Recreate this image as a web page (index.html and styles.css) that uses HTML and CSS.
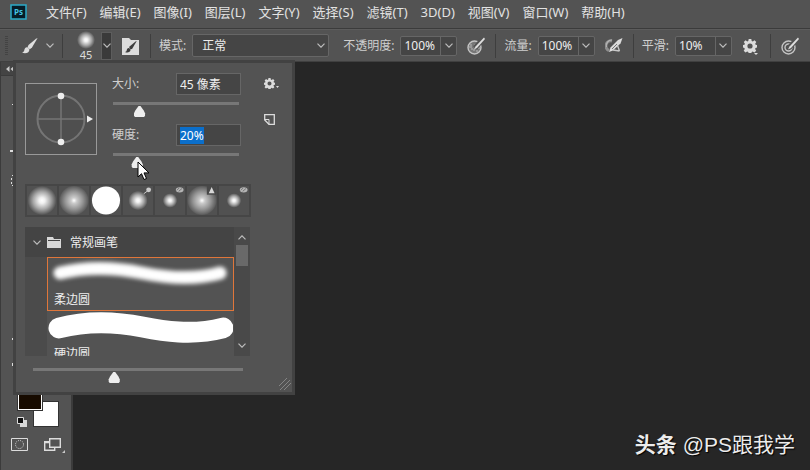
FILE: index.html
```html
<!DOCTYPE html>
<html lang="zh-CN">
<head>
<meta charset="utf-8">
<title>Ps</title>
<link rel="stylesheet" href="styles.css">
</head>
<body>
<svg class="defs" aria-hidden="true">
  <defs>
    <radialGradient id="dab"><stop offset="0" stop-color="#fff"/><stop offset=".2" stop-color="#fff" stop-opacity=".92"/><stop offset=".6" stop-color="#fff" stop-opacity=".5"/><stop offset="1" stop-color="#fff" stop-opacity="0"/></radialGradient>
    <radialGradient id="dab-soft"><stop offset="0" stop-color="#fff"/><stop offset=".2" stop-color="#fff" stop-opacity=".7"/><stop offset=".6" stop-color="#fff" stop-opacity=".4"/><stop offset="1" stop-color="#fff" stop-opacity=".05"/></radialGradient>
    <symbol id="chevron" viewBox="0 0 8 5"><path d="M.5 .7 4 4.2 7.5 .7" fill="none" stroke="#bdbdbd" stroke-width="1.2"/></symbol>
    <symbol id="brush" viewBox="0 0 16 16"><path d="M15.600 0 14 .8 6.500 7 5.500 9.200 7.800 11.200 10 9.500Z"/><path d="M5 9.300C3.200 9.500 2.500 10.700 2.300 12.300 2.100 13.600 1.200 14.300 0 14.600 2.800 16 7.300 15.300 7.400 11.700 6.900 10.500 6.100 9.600 5 9.300Z"/></symbol>
    <symbol id="gear" viewBox="0 0 14 14"><path fill-rule="evenodd" d="M5.700 0h2.600l.4 2 1.100.5L11.500 1.300l1.800 1.800-1.100 1.700.4 1 1.400.3v2.500l-1.500.4-.4 1 1.100 1.700-1.800 1.800-1.700-1.100-1 .5-.4 1.700H5.700l-.4-1.700-1.100-.5-1.700 1.100L.7 11.700 1.800 10l-.4-1-1.400-.4V6.100l1.500-.3.4-1L.8 3.100l1.800-1.800 1.700 1.200 1-.5ZM7 4.400a2.600 2.600 0 1 0 0 5.200 2.600 2.600 0 0 0 0-5.200Z"/></symbol>
    <g id="wet"><ellipse cx="25" cy="4" rx="4" ry="2.800" fill="#b4b4b4"/><path d="m22 4.500 2.500-2.500M24 5.500 27.500 2.500" stroke="#666" stroke-width=".8"/></g>
  </defs>
</svg>

<nav class="menubar" aria-label="Menu">
  <svg class="logo" viewBox="0 0 17 16"><rect x="1" y="1" width="15" height="14" fill="#061c28" stroke="#2cabc9" stroke-width="1.500"/><text x="4" y="11" class="logo-text">Ps</text></svg>
  <a href="#">文件(F)</a><a href="#">编辑(E)</a><a href="#">图像(I)</a><a href="#">图层(L)</a><a href="#">文字(Y)</a><a href="#">选择(S)</a><a href="#">滤镜(T)</a><a href="#">3D(D)</a><a href="#">视图(V)</a><a href="#">窗口(W)</a><a href="#">帮助(H)</a>
</nav>

<div class="options">
  <span class="grip"></span>
  <button class="tool" aria-label="Brush"><svg class="i16" fill="#dedede"><use href="#brush"/></svg><svg class="chev"><use href="#chevron"/></svg></button>
  <span class="sep"></span>
  <div class="preset"><svg viewBox="0 0 18 18"><circle cx="9" cy="9" r="9" fill="url(#dab)"/></svg><span>45</span></div>
  <button class="preset-open" aria-label="Open presets"><svg class="chev"><use href="#chevron"/></svg></button>
  <button class="settings" aria-label="Brush settings"><svg class="i18" viewBox="0 0 18 18"><path d="M0 1h7l2 2h8v15H0Z" fill="#dcdcdc"/><svg x="3" y="4" width="12" height="12" fill="#3c3c3c"><use href="#brush"/></svg></svg></button>
  <span class="sep"></span>
  <div class="field mode-field">
    <label for="mode">模式:</label>
    <span class="pick"><select id="mode"><option>正常</option></select><svg class="chev"><use href="#chevron"/></svg></span>
  </div>
  <div class="field">
    <label for="opacity">不透明度:</label>
    <span class="combo"><input id="opacity" type="text" value="100%"><button aria-label="Opacity slider"><svg class="chev"><use href="#chevron"/></svg></button></span>
  </div>
  <button class="icon" aria-label="Pressure opacity"><svg class="i18" viewBox="0 0 18 18"><circle cx="7.500" cy="10.500" r="6.500" fill="#777" stroke="#c4c4c4" stroke-width="1.400"/><path d="M3 8h2M7 8h2M2 10h3M6 13h2M4 12h2M9 14h2M11 11h2" stroke="#b8b8b8"/><path d="M16.500 1.500 8 11" stroke="#535353" stroke-width="5"/><path d="M17 .5 8.500 9.500 7 12.500 10 11 18 2Z" fill="#dedede"/></svg></button>
  <span class="sep"></span>
  <div class="field">
    <label for="flow">流量:</label>
    <span class="combo"><input id="flow" type="text" value="100%"><button aria-label="Flow slider"><svg class="chev"><use href="#chevron"/></svg></button></span>
  </div>
  <button class="icon" aria-label="Airbrush"><svg class="i18" viewBox="0 0 18 18" fill="none"><path d="M7 4A5 5 0 0 0 4 13.500" stroke="#8e8e8e" stroke-width="3"/><path d="M7 3A5.500 5.500 0 0 0 1.500 10" stroke="#b5b5b5" stroke-width="1.200"/><path d="M17.500 1 13 3 5.500 10.500 4 15 8 13.500 15.500 6.500Z" fill="#dcdcdc"/><path d="M12.500 8.500 14.500 14M8 13l6.500 1" stroke="#c8c8c8" stroke-width="1.400"/><path d="m7 12 5-5" stroke="#777"/></svg></button>
  <span class="sep"></span>
  <div class="field">
    <label for="smooth">平滑:</label>
    <span class="combo"><input id="smooth" type="text" value="10%"><button aria-label="Smoothing slider"><svg class="chev"><use href="#chevron"/></svg></button></span>
  </div>
  <button class="icon" aria-label="Smoothing options"><svg class="i18" viewBox="0 0 18 18" fill="#dcdcdc"><svg x="1" y="2" width="14" height="14"><use href="#gear"/></svg><path d="M12 16h4l-2 2Z"/></svg></button>
  <span class="sep"></span>
  <button class="icon" aria-label="Pressure size"><svg class="i18" viewBox="0 0 18 18" fill="none"><circle cx="7.500" cy="10.500" r="6.500" stroke="#c4c4c4" stroke-width="1.400"/><circle cx="7.500" cy="10.500" r="3.500" stroke="#c4c4c4" stroke-width="1.400"/><path d="M16.500 1.500 8 11" stroke="#535353" stroke-width="5"/><path d="M17 .5 8.500 9.500 7 12.500 10 11 18 2Z" fill="#dedede"/></svg></button>
</div>

<div class="workspace">
  <aside class="toolbar">
    <div class="collapse"><svg viewBox="0 0 8 6"><path d="M3.500 0v6L0 3ZM8 0v6L4.500 3Z" fill="#c8c8c8"/></svg></div>
    <svg class="tools" viewBox="0 0 14 300" fill="#ddd"><path d="M11 28h1v1h-1ZM9 74h3v2H9ZM11 99h1v1h-1ZM10 102h1v2h-1ZM10 106h1v2h-1ZM11 109h1v1h-1ZM11 262h1v2h-1ZM11 287h1v3h-1Z"/></svg>
    <div class="colors">
      <span class="back"></span><span class="fore"></span>
      <svg class="defaults" viewBox="0 0 10 10"><path d="M3 3h7v7H3Z" fill="#d8d8d8"/><path d="M.5.5h6v6h-6Z" fill="#111" stroke="#ddd"/></svg>
    </div>
    <div class="modes">
      <button aria-label="Quick mask"><svg width="17" height="13" viewBox="0 0 17 13" fill="none"><path d="M.5.5h16v12H.5Z" stroke="#dcdcdc"/><circle cx="8.500" cy="6.500" r="4" stroke="#dcdcdc" stroke-dasharray="1 1.100"/></svg></button>
      <button aria-label="Screen mode"><svg width="22" height="16" viewBox="0 0 22 16" fill="none"><path d="M.7 3.700h10v8.600H.7ZM.7 4.500h5" stroke="#dcdcdc" stroke-width="1.400"/><path d="M5.700.7h10.600v8.600H5.700Z" fill="#535353" stroke="#dcdcdc" stroke-width="1.400"/><path d="M21 12v3h-3Z" fill="#c8c8c8"/></svg></button>
    </div>
  </aside>
  <main class="canvas"><p class="mark"><b>头条</b> @PS跟我学</p></main>
</div>

<section class="panel" aria-label="Brush presets">
  <div class="tip">
    <svg class="angle" viewBox="0 0 72 72"><rect x=".5" y=".5" width="71" height="71" fill="#4f4f4f" stroke="#999"/><g fill="none" stroke="#757575"><path d="M13 36h46M36 13v46" stroke-width="1.500"/><circle cx="36" cy="36" r="23.500" stroke-width="2"/></g><g fill="#eee"><circle cx="36" cy="13" r="3.300"/><circle cx="36" cy="59" r="3.300"/><path d="M62 32.500v7l6-3.500Z"/></g></svg>
    <div class="sliders">
      <div class="row"><label for="size">大小:</label><input id="size" type="text" value="45 像素"></div>
      <input type="range" aria-label="大小" value="18">
      <div class="row"><label for="hard">硬度:</label><input id="hard" type="text" value="20%"></div>
      <input type="range" aria-label="硬度" value="16">
    </div>
    <div class="actions">
      <button aria-label="Panel menu"><svg width="16" height="12" viewBox="0 0 16 12" fill="#dcdcdc"><svg width="11" height="11"><use href="#gear"/></svg><path d="M12 8h3l-1.500 2Z"/></svg></button>
      <button aria-label="New preset"><svg width="11" height="11" viewBox="0 0 11 11" fill="none" stroke="#dcdcdc"><path d="M.7.7h9.600v9.600H5L.7 6Z" stroke-width="1.300"/><path d="M.7 5.500H5v5"/></svg></button>
    </div>
  </div>
  <div class="strip">
    <button aria-label="Soft 1"><svg viewBox="0 0 30 30"><circle cx="15" cy="15" r="15" fill="url(#dab)"/></svg></button>
    <button aria-label="Soft 2"><svg viewBox="0 0 30 30"><circle cx="15" cy="15" r="15" fill="url(#dab-soft)"/></svg></button>
    <button aria-label="Hard"><svg viewBox="0 0 30 30"><circle cx="15" cy="15" r="14.500" fill="#fff"/></svg></button>
    <button aria-label="Mixer"><svg viewBox="0 0 30 30"><circle cx="15" cy="15" r="10" fill="url(#dab)"/><circle cx="26" cy="4" r="2.500" fill="#ccc"/><path d="m21 8 4-3" stroke="#ccc"/></svg></button>
    <button aria-label="Wet 1"><svg viewBox="0 0 30 30"><circle cx="15" cy="15" r="7.500" fill="url(#dab)"/><use href="#wet"/></svg></button>
    <button aria-label="Soft 3"><svg viewBox="0 0 30 30"><circle cx="15" cy="15" r="15" fill="url(#dab-soft)"/><path d="M20 0h10v9H20Z" fill="#484848"/><path d="M25 1 28 7.500h-6Z" fill="#d8d8d8"/></svg></button>
    <button aria-label="Wet 2"><svg viewBox="0 0 30 30"><circle cx="15" cy="15" r="7.500" fill="url(#dab)"/><use href="#wet"/></svg></button>
  </div>
  <div class="browser">
    <div class="tree">
      <div class="folder"><svg class="chev"><use href="#chevron"/></svg><svg width="14" height="11" viewBox="0 0 14 11"><path d="M0 0h6l1 2h7v9H0Z" fill="#d8d8d8"/><path d="M1 3.500h12" stroke="#444"/></svg><span>常规画笔</span></div>
      <ul>
        <li class="chosen"><svg class="soft" viewBox="0 0 186 32"><path d="M12 15C45 7 75 11 95 15S145 23 173 15" fill="none" stroke="#fff" stroke-width="13" stroke-linecap="round"/></svg><span>柔边圆</span></li>
        <li><svg viewBox="0 0 186 32"><path d="M11 16C45 7 75 11 95 15S145 24 176 16" fill="none" stroke="#fff" stroke-width="21" stroke-linecap="round"/></svg><span>硬边圆</span></li>
      </ul>
    </div>
    <div class="scroll"><svg class="chev up"><use href="#chevron"/></svg><span></span><svg class="chev"><use href="#chevron"/></svg></div>
  </div>
  <input class="zoom" type="range" aria-label="预览大小" value="38">
  <svg class="resize" viewBox="0 0 12 12"><path d="M0 8 8 0M1 12 11 2M5 12l7-7" stroke="#858585"/></svg>
  <svg class="cursor" viewBox="0 0 13 20"><path d="M1 1v15l3.500-3.300L7 18.500l2.500-1-2.500-5.600h5Z" fill="#fff" stroke="#000"/></svg>
</section>
<script>
  const hardness = document.getElementById("hard");
  hardness.focus();
  hardness.select();
</script>
</body>
</html>
```
FILE: styles.css
```css
* { box-sizing: border-box; }
body {
  margin: 0;
  height: 100vh;
  display: flex;
  flex-direction: column;
  overflow: hidden;
  position: relative;
  background: #535353;
  color: #dcdcdc;
  font: 12px/16px "Noto Sans", "Noto Sans CJK SC", sans-serif;
}
button, input, select {
  font: inherit;
  color: inherit;
  margin: 0;
  padding: 0;
  border: 0;
  border-radius: 0;
  background: none;
  outline: 0;
}
button { display: flex; align-items: center; justify-content: center; }
svg { display: block; flex: none; }
.defs { position: absolute; width: 0; height: 0; }
.chev { width: 8px; height: 5px; }
.i16 { width: 16px; height: 16px; }
.i18 { width: 18px; height: 18px; }

.menubar {
  display: flex;
  align-items: center;
  gap: 13px;
  height: 29px;
  padding: 0 10px 4px;
  border-bottom: 1px solid #3b3b3b;
  font-size: 13px;
  white-space: nowrap;
}
.menubar a { color: #e2e2e2; text-decoration: none; }
.logo { width: 17px; height: 16px; margin-right: 6px; }
.logo-text { fill: #45c5e5; font: bold 8px "Open Sans", sans-serif; }

.options {
  display: flex;
  align-items: center;
  height: 33px;
  padding: 0 0 0 5px;
  border-top: 1px solid #5c5c5c;
  border-bottom: 1px solid #404040;
  white-space: nowrap;
}
.grip { width: 3px; height: 20px; background: repeating-linear-gradient(#434343 0 1px, #535353 1px 2px); }
.tool { gap: 8px; margin: 0 8px 0 14px; }
.sep { flex: none; width: 1px; height: 24px; background: #3e3e3e; }
.preset { width: 38px; padding-left: 8px; text-align: center; font-size: 11px; line-height: 12px; }
.preset svg { width: 18px; height: 18px; margin: 0 auto; }
.preset-open { width: 11px; height: 28px; background: #3a3a3a; border: 1px solid #5d5d5d; }
.settings { margin: 0 10px; }
.field { display: flex; align-items: center; justify-content: space-between; gap: 6px; margin-left: 8px; }
.mode-field { margin-right: 6px; }
.options label, .row label { color: #cfcfcf; }
.pick { display: flex; align-items: center; }
.pick select {
  appearance: none;
  width: 137px;
  height: 23px;
  padding-left: 9px;
  background: #454545;
  border: 1px solid #666;
  border-radius: 2px;
  color: #eee;
}
.pick .chev { margin-left: -12px; margin-right: 4px; pointer-events: none; }
.combo { display: flex; height: 20px; background: #454545; border: 1px solid #666; border-radius: 2px; color: #eee; }
.combo input { width: 39px; padding-left: 3px; }
.combo button { width: 16px; border-left: 1px solid #666; }
.icon { margin: 0 10px; }

.workspace { flex: 1; display: flex; min-height: 0; }
.toolbar {
  width: 73px;
  display: flex;
  flex-direction: column;
  border-left: 1px solid #3b3b3b;
  border-right: 2px solid #3b3b3b;
}
.collapse { height: 14px; padding: 4px 5px; background: #444; border-bottom: 1px solid #3b3b3b; }
.collapse svg { width: 8px; height: 6px; }
.tools { width: 14px; height: 300px; }
.colors { position: relative; width: 42px; height: 42px; margin: auto 0 11px 16px; }
.fore, .back { position: absolute; width: 26px; height: 26px; border: 1px solid #333; }
.fore { left: 0; top: 0; background: #170b00; box-shadow: inset 0 0 0 1px #fff; }
.back { right: 0; bottom: 0; background: #fff; }
.defaults { position: absolute; left: 0; bottom: 0; width: 10px; height: 10px; }
.modes { display: flex; align-items: flex-start; gap: 16px; padding: 0 0 16px 10px; }
.canvas { flex: 1; display: flex; align-items: flex-end; justify-content: flex-end; background: #262626; }
.mark {
  margin: 0 15px 13px;
  color: #ececec;
  font: 21px/24px "Liberation Sans", "Noto Sans CJK SC", sans-serif;
  text-shadow: 1px 1px 1px #000;
}

.panel {
  position: absolute;
  left: 13px;
  top: 60px;
  width: 282px;
  padding: 10px 9px 3px;
  background: #535353;
  border: 3px solid #424242;
}
.tip { display: flex; }
.angle { width: 72px; height: 72px; margin-top: 10px; }
.sliders { width: 129px; margin: 0 23px 0 15px; }
.row { display: flex; align-items: center; justify-content: space-between; height: 22px; margin-bottom: 7px; }
.row input { width: 65px; height: 22px; padding-left: 3px; background: #454545; border: 1px solid #666; color: #eee; }
.row input::selection { background: #0b6fcb; color: #fff; }
.actions { display: flex; flex-direction: column; align-items: flex-start; gap: 24px; padding-top: 5px; }
input[type="range"] {
  appearance: none;
  display: block;
  width: 126px;
  height: 15px;
  margin: 0 1px 7px;
}
input[type="range"]::-webkit-slider-runnable-track { height: 15px; background: linear-gradient(#777 3px, transparent 3px); }
input[type="range"]::-webkit-slider-thumb {
  appearance: none;
  width: 12px;
  height: 11px;
  margin-top: 4px;
  background: #eee;
  clip-path: polygon(42% 0, 58% 0, 85% 40%, 96% 65%, 96% 88%, 88% 100%, 12% 100%, 4% 88%, 4% 65%, 15% 40%);
}

.strip { display: flex; gap: 2px; width: 226px; margin-top: 9px; padding: 2px; background: #464646; }
.strip button { flex: 1; background: #515151; }
.strip button > svg { width: 100%; height: 29px; }

.browser { display: flex; width: 225px; height: 129px; margin-top: 10px; overflow: hidden; background: #4b4b4b; }
.tree { flex: 1; }
.folder { display: flex; align-items: center; gap: 6px; height: 30px; padding-left: 8px; background: #444; color: #eee; }
.folder span { padding: 2px 0 0 3px; }
.tree ul { margin: 0 0 0 22px; padding: 0; list-style: none; background: #535353; }
.tree li { height: 54px; padding: 1px; color: #eee; overflow: hidden; }
.tree li.chosen { padding: 0; border: 1px solid #e0763a; }
.tree li svg { width: 100%; height: 32px; }
.soft { filter: blur(2px); }
.tree li span { display: block; padding: 2px 0 0 6px; }
.scroll { width: 16px; display: flex; flex-direction: column; align-items: center; padding: 8px 0; background: #494949; }
.scroll span { width: 12px; height: 21px; margin: 5px 0 auto; background: #696969; }
.up { transform: scaleY(-1); }
input.zoom { width: 210px; margin: 12px 8px 6px; }
.resize { position: absolute; right: 1px; bottom: 2px; width: 12px; height: 12px; }
.cursor { position: absolute; left: 121px; top: 98px; width: 13px; height: 20px; }
```
